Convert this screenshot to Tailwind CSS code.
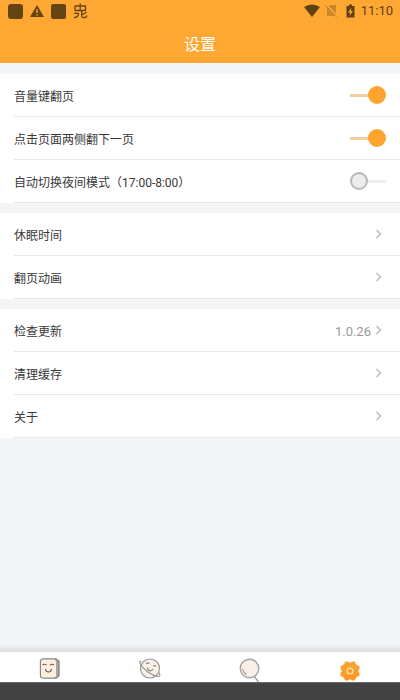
<!DOCTYPE html>
<html lang="zh-CN">
<head>
<meta charset="utf-8">
<meta name="viewport" content="width=device-width, initial-scale=1">
<title>设置</title>
<script src="https://cdn.jsdelivr.net/npm/@tailwindcss/browser@4"></script>
</head>
<body class="flex min-h-screen flex-col bg-[#f4f5f7] font-['Roboto','Noto_Sans_CJK_SC',sans-serif] text-xs text-[#383838]">
<header class="bg-[#ffa733] pb-1">
  <div class="flex h-[22px] items-center justify-between pr-[7px] pl-2 text-[#5f4013]">
    <div class="flex items-center gap-[7px]">
      <span class="size-[15px] rounded-[3px] bg-[#654414]"></span>
      <svg class="h-[14px] w-[14px]" viewBox="0 0 14 14" aria-hidden="true"><path d="M7 1 14 13H0Z" fill="#654414"/><path d="M7 5v4M7 10.2v1.4" stroke="#ffa733" stroke-width="1.4"/></svg>
      <span class="size-[15px] rounded-[2px] bg-[#654414]"></span>
      <svg class="h-[16px] w-[15px]" viewBox="0 0 15 16" fill="none" stroke="#654414" stroke-width="1.3" stroke-linecap="round" stroke-linejoin="round" aria-hidden="true"><path d="M2 3h10.500v4.500H2zM7.200 1v6.500M1.500 10.300h4q.3 3.500-4 4.400M8.700 7.500v5.500q0 1.500 1.500 1.500h2q1.500 0 1.500-1.500M13 9.500q-1.500 1.500-4 2"/></svg>
    </div>
    <div class="flex items-center">
      <svg class="h-[13px] w-4" viewBox="0 0 16 13" aria-hidden="true"><path d="M0 3Q8-2 16 3L8 13Z" fill="#5f4013"/></svg>
      <svg class="ml-[5px] h-[13px] w-[13px]" viewBox="0 0 13 13" aria-hidden="true"><path d="M5 1h6v11H2V4Z" fill="#c9872e"/><path d="M0 0 12.500 13" stroke="#ffa733" stroke-width="2.500"/><path d="M.5 1.500 11.500 13" stroke="#b3752a" stroke-width="1"/></svg>
      <svg class="ml-[8px] h-[14px] w-[9px]" viewBox="0 0 9 14" aria-hidden="true"><path d="M3 .5h3V2h2.500v11.500H.5V2H3Z" fill="#5f4013"/><path d="M5.500 3.500 2 8.500h2.200L3.500 12 7 7H4.800Z" fill="#ffa733"/></svg>
      <time class="ml-[6px] text-[13px]">11:10</time>
    </div>
  </div>
  <h1 class="pt-[9px] text-center text-base leading-7 text-white">设置</h1>
</header>

<main class="mt-[11px] flex flex-1 flex-col gap-[10px]">
  <section class="bg-white pl-[14px]">
    <label class="flex h-[43px] items-center justify-between border-b border-[#e8e8e8] pr-[14px]"><span class="pt-[3px]">音量键翻页</span>
      <input type="checkbox" role="switch" checked class="relative h-[18px] w-9 appearance-none before:absolute before:inset-x-0 before:top-2 before:h-[3px] before:bg-[#eeeeee] after:absolute after:top-0 after:left-0 after:size-[18px] after:rounded-full after:border-2 after:border-[#b9b9b9] after:bg-[#ececec] checked:before:bg-[#f0cfa0] checked:after:left-[18px] checked:after:border-[#ffa52f] checked:after:bg-[#ffa52f]"></label>
    <label class="flex h-[43px] items-center justify-between border-b border-[#e8e8e8] pr-[14px]"><span class="pt-[3px]">点击页面两侧翻下一页</span>
      <input type="checkbox" role="switch" checked class="relative h-[18px] w-9 appearance-none before:absolute before:inset-x-0 before:top-2 before:h-[3px] before:bg-[#eeeeee] after:absolute after:top-0 after:left-0 after:size-[18px] after:rounded-full after:border-2 after:border-[#b9b9b9] after:bg-[#ececec] checked:before:bg-[#f0cfa0] checked:after:left-[18px] checked:after:border-[#ffa52f] checked:after:bg-[#ffa52f]"></label>
    <label class="flex h-[43px] items-center justify-between border-b border-[#e8e8e8] pr-[14px]"><span class="pt-[3px]">自动切换夜间模式（17:00-8:00）</span>
      <input type="checkbox" role="switch" class="relative h-[18px] w-9 appearance-none before:absolute before:inset-x-0 before:top-2 before:h-[3px] before:bg-[#eeeeee] after:absolute after:top-0 after:left-0 after:size-[18px] after:rounded-full after:border-2 after:border-[#b9b9b9] after:bg-[#ececec] checked:before:bg-[#f0cfa0] checked:after:left-[18px] checked:after:border-[#ffa52f] checked:after:bg-[#ffa52f]"></label>
  </section>

  <section class="bg-white pl-[14px]">
    <a href="#sleep" class="flex h-[43px] items-center justify-between border-b border-[#e8e8e8] pr-[18px]"><span class="pt-[3px]">休眠时间</span>
      <svg class="h-[10px] w-[7px]" viewBox="0 0 7 10" fill="none" stroke="#bdbdbd" stroke-width="1.500" aria-hidden="true"><path d="m1.500 1 4 4-4 4"/></svg></a>
    <a href="#animation" class="flex h-[43px] items-center justify-between border-b border-[#e8e8e8] pr-[18px]"><span class="pt-[3px]">翻页动画</span>
      <svg class="h-[10px] w-[7px]" viewBox="0 0 7 10" fill="none" stroke="#bdbdbd" stroke-width="1.500" aria-hidden="true"><path d="m1.500 1 4 4-4 4"/></svg></a>
  </section>

  <section class="bg-white pl-[14px]">
    <a href="#update" class="flex h-[43px] items-center justify-between border-b border-[#e8e8e8] pr-[18px]"><span class="pt-[3px]">检查更新</span>
      <span class="flex items-center gap-1 text-[13px] text-[#999999]"><span class="pt-[3px]">1.0.26</span>
      <svg class="h-[10px] w-[7px]" viewBox="0 0 7 10" fill="none" stroke="#bdbdbd" stroke-width="1.500" aria-hidden="true"><path d="m1.500 1 4 4-4 4"/></svg></span></a>
    <a href="#cache" class="flex h-[43px] items-center justify-between border-b border-[#e8e8e8] pr-[18px]"><span class="pt-[3px]">清理缓存</span>
      <svg class="h-[10px] w-[7px]" viewBox="0 0 7 10" fill="none" stroke="#bdbdbd" stroke-width="1.500" aria-hidden="true"><path d="m1.500 1 4 4-4 4"/></svg></a>
    <a href="#about" class="flex h-[43px] items-center justify-between border-b border-[#e8e8e8] pr-[18px]"><span class="pt-[3px]">关于</span>
      <svg class="h-[10px] w-[7px]" viewBox="0 0 7 10" fill="none" stroke="#bdbdbd" stroke-width="1.500" aria-hidden="true"><path d="m1.500 1 4 4-4 4"/></svg></a>
  </section>
</main>

<div class="h-2 bg-linear-to-b from-[#f4f5f7] to-[#dddedf]"></div>
<nav class="grid h-[30px] grid-cols-4 bg-white">
  <a href="#shelf" aria-label="书架" class="flex justify-center pt-[6px]">
    <svg class="size-[22px]" viewBox="0 0 22 22" fill="none" aria-hidden="true"><path d="M4 1h13l3 2v15l-3 2H4q-2.500 0-2.500-2.500v-14Q1.500 1 4 1Z" fill="#a9a7a5" stroke="#858585" stroke-width="1.300"/><rect x="2" y="1.500" width="15" height="18" rx="2" fill="#fdeedd"/><path d="M3.500 7q2-1.500 4 0M11 7q2-1.500 4 0M6.500 11q.5 3 3 3t3-3" stroke="#68615b" stroke-width="1.200"/></svg></a>
  <a href="#discover" aria-label="发现" class="flex justify-center pt-[6px]">
    <svg class="size-[22px]" viewBox="0 0 22 22" fill="none" stroke="#999999" stroke-width="1.200" aria-hidden="true"><circle cx="11" cy="10.500" r="9.500" fill="#fbf2e7"/><path d="M2.500 3.500Q0 3 1 5.500C4 11 12 17.500 19 18.500q3 0 1-4"/><path d="M7 6q2-2 3.500-.5M14 8q2-1 3 .5M8.500 9.500q0 3 2.500 3.300 2 .2 3-1.800" stroke="#94877c"/></svg></a>
  <a href="#search" aria-label="搜索" class="flex justify-center pt-[6px]">
    <svg class="h-6 w-[22px]" viewBox="0 0 22 24" fill="none" stroke="#a5a5a5" aria-hidden="true"><circle cx="10.500" cy="10.500" r="9.300" fill="#fbf0e5" stroke-width="1.400"/><path d="M3.500 11q1 4 4 6" stroke-width="1.200"/><path d="m15.500 18.500 5 7" stroke-width="1.500"/></svg></a>
  <a href="#settings" aria-label="设置" aria-current="page" class="flex justify-center pt-[8px]">
    <svg class="size-[22px]" viewBox="0 0 22 22" fill="none" aria-hidden="true"><defs><linearGradient id="gear" x2="0" y2="1"><stop stop-color="#f7a63c"/><stop offset="1" stop-color="#ff9520"/></linearGradient></defs><path d="M6.500 1.500h2q1 0 1.500 1h2q.5-1 1.500-1h2q1 0 1 2l2 2q2 0 2 1v2q0 1-1 1.500v2q1 .5 1 1.500v2q0 1-2 1l-2 2q0 2-1 2h-2q-1 0-1.500-1h-2q-.5 1-1.500 1h-2q-1 0-1-2l-2-2q-2 0-2-1v-2q0-1 1-1.500v-2q-1-.5-1-1.500v-2q0-1 2-1l2-2q0-2 1-2Z" fill="url(#gear)"/><circle cx="11" cy="11" r="2.900" stroke="#ffe0a8" stroke-width="1.300"/></svg></a>
</nav>
<footer class="h-[18px] border-t border-[#6a6a6a] bg-[#434343]"></footer>
</body>
</html>
